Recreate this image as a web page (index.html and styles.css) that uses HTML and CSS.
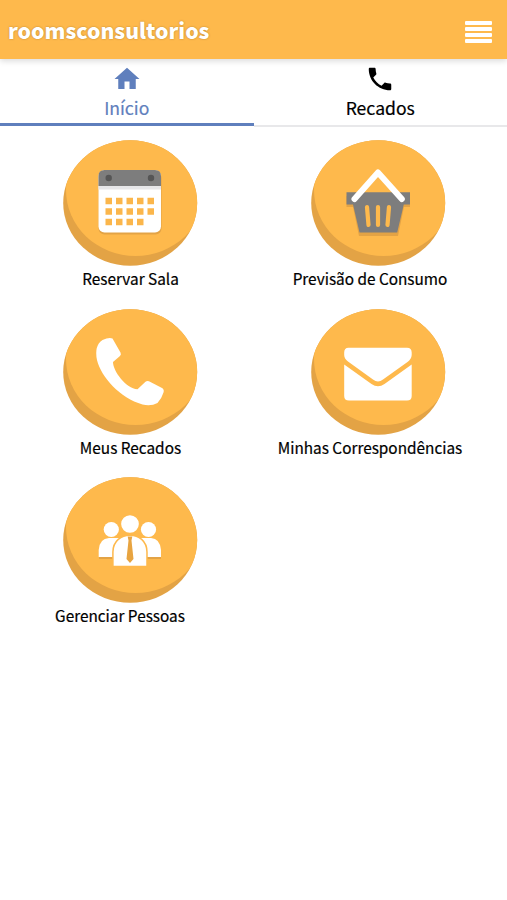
FILE: index.html
```html
<!DOCTYPE html>
<html lang="pt-BR">
<head>
    <meta charset="UTF-8">
    <meta name="viewport" content="width=device-width, initial-scale=1.0">
    <title>roomsconsultorios</title>
    <link rel="stylesheet" href="styles.css">
</head>
<body>
    <header class="topbar">
        <div class="brand">roomsconsultorios</div>
        <div class="menu-btn">
            <span></span>
            <span></span>
            <span></span>
            <span></span>
        </div>
    </header>

    <nav class="tabs">
        <a class="tab active">
            <svg viewBox="0 0 24 24"><path d="M10 20v-6h4v6h5v-8h3L12 3 2 12h3v8z"/></svg>
            <span>Início</span>
        </a>
        <a class="tab">
            <svg viewBox="0 0 24 24"><path d="M6.62 10.79c1.44 2.83 3.76 5.14 6.59 6.59l2.2-2.2c.27-.27.67-.36 1.02-.24 1.12.37 2.33.57 3.57.57.55 0 1 .45 1 1V20c0 .55-.45 1-1 1-9.39 0-17-7.61-17-17 0-.55.45-1 1-1h3.5c.55 0 1 .45 1 1 0 1.25.2 2.45.57 3.57.11.35.03.74-.25 1.02z"/></svg>
            <span>Recados</span>
        </a>
    </nav>

    <!-- round button shape shared by all the icons -->
    <svg class="defs">
        <defs>
            <clipPath id="round"><ellipse cx="67.2" cy="63" rx="67" ry="62.7"/></clipPath>
            <g id="disc">
                <ellipse class="disc-side" cx="67.2" cy="63" rx="67" ry="62.7"/>
                <ellipse class="disc-top" cx="72.5" cy="50" rx="69.5" ry="66" clip-path="url(#round)"/>
            </g>
        </defs>
    </svg>

    <main class="options">
        <a class="option">
            <svg class="option-icon" viewBox="0 0 134.4 126">
                <use href="#disc"/>
                <rect class="shade" x="35.5" y="32" width="63" height="62.5" rx="6"/>
                <rect class="white" x="35.5" y="30" width="62.5" height="62.5" rx="6"/>
                <path class="gray" d="M35.5 46V36q0-6 6-6h50.5q6 0 6 6v10z"/>
                <path class="paper-line" d="M35.5 46H98v3.5H35.5z"/>
                <circle class="dark" cx="45.7" cy="38" r="3.2"/>
                <circle class="dark" cx="88" cy="38" r="3.2"/>
                <path class="days" d="M42.5 61H92M42.5 71.5H92M42.5 82H81.5"/>
            </svg>
            <span class="caption">Reservar Sala</span>
        </a>
        <a class="option">
            <svg class="option-icon" viewBox="0 0 134.4 126">
                <use href="#disc"/>
                <path class="shade" d="M35.5 56H99v11H93L87 96H48L42 67H35.5z"/>
                <path class="gray" d="M35.5 52.2H99V64.5H92.8L86.2 92.5H48.5L42 64.5H35.5z"/>
                <path class="slots" d="M56 67L57.5 85M67 67V85M78 67L76.5 85"/>
                <path class="handle" d="M43.5 59L67 32.5L90.8 59"/>
            </svg>
            <span class="caption shifted">Previsão de Consumo</span>
        </a>
        <a class="option">
            <svg class="option-icon" viewBox="0 0 134.4 126">
                <use href="#disc"/>
                <path class="white" d="M39.5 31Q46 28 49.5 29.5L57.5 43.5Q58.5 45.5 57 47L50 53C50 62 63 79.5 74.5 80.3L82.5 72.7Q84 71.5 86 72.3L99 79Q101.5 80.5 100.5 83.5Q98.5 90 94.5 94Q88 97.5 79.5 95.5C57 89 38 68 34 51Q31 36.5 39.5 31z"/>
            </svg>
            <span class="caption">Meus Recados</span>
        </a>
        <a class="option">
            <svg class="option-icon" viewBox="0 0 134.4 126">
                <use href="#disc"/>
                <path class="white" d="M37.5 38.7H96Q100.7 38.7 100.7 43.5V46Q100.5 50 96.5 53L72 70.5Q67 74.5 62 70.5L37 52.5Q33.2 49.5 33.2 46V43.5Q33.2 38.7 37.5 38.7z"/>
                <path class="white" d="M33.2 55.5L60.5 75Q67 79.5 73.5 75L100.7 55.5V87Q100.7 91.5 96 91.5H38Q33.2 91.5 33.2 87z"/>
            </svg>
            <span class="caption shifted">Minhas Correspondências</span>
        </a>
        <a class="option">
            <svg class="option-icon" viewBox="0 0 134.4 126">
                <use href="#disc"/>
                <path class="shade" d="M36 80H98V82H84V90H50V82H36z"/>
                <circle class="white" cx="48.3" cy="52.5" r="7.6"/>
                <circle class="white" cx="85.5" cy="52.5" r="7.6"/>
                <path class="white" d="M35.7 80V73Q36.5 61.5 46 61H88Q97 61.5 98 73V80z"/>
                <path class="person" d="M49.9 89.5V75C50 52.5 84 52.5 84 75V89.5z"/>
                <circle class="person" cx="67" cy="47" r="9.6"/>
                <path class="tie" d="M64.7 59.5H69.3L68.5 63.5L70.5 82L67 86L63.5 82L65.5 63.5z"/>
            </svg>
            <span class="caption shifted-more">Gerenciar Pessoas</span>
        </a>
    </main>
</body>
</html>
```
FILE: styles.css
```css
* {
    box-sizing: border-box;
}
body {
    margin: 0;
    background: #fff;
    color: #000;
    font-family: "Noto Sans CJK JP", "Open Sans", sans-serif;
}
.topbar {
    position: relative;
    display: flex;
    justify-content: space-between;
    align-items: center;
    height: 59px;
    padding: 2px 15px 0 8px;
    background: #feb94c;
    box-shadow: 0 2px 6px rgba(0, 0, 0, 0.15);
}
.brand {
    padding-bottom: 2px;
    color: #fff;
    font-size: 21.2px;
    font-weight: 900;
    line-height: 30px;
    text-shadow: 0 0 2px rgba(90, 60, 0, 0.45);
}
.menu-btn {
    display: flex;
    flex-direction: column;
    gap: 2px;
    width: 27px;
    padding-top: 2px;
}
.menu-btn span {
    height: 4px;
    border-radius: 1px;
    background: #fff;
}
.tabs {
    display: flex;
    height: 68px;
}
.tab {
    flex: 1;
    display: flex;
    flex-direction: column;
    align-items: center;
    padding-top: 5px;
    border-bottom: 2px solid #e8e8ea;
    color: #000;
    font-size: 17.6px;
    font-weight: 400;
    line-height: 27px;
    -webkit-text-stroke: 0.2px currentColor;
}
.tab svg {
    width: 30px;
    height: 30px;
    fill: currentColor;
}
.tab.active {
    height: 67px;
    border-bottom: 3px solid #5f7fbd;
    color: #5f7fbd;
}
.defs {
    display: block;
    width: 0;
    height: 0;
}
.options {
    display: grid;
    grid-template-columns: 248px 248px;
    grid-auto-rows: 168.6px;
    padding: 13.2px 0 0 6.5px;
}
.option {
    display: flex;
    flex-direction: column;
    align-items: center;
}
.option-icon {
    width: 134.4px;
    height: 126px;
}
.caption {
    font-size: 15.35px;
    font-weight: 400;
    line-height: 24px;
    white-space: nowrap;
    -webkit-text-stroke: 0.2px currentColor;
}
.shifted {
    padding-right: 17px;
}
.shifted-more {
    padding-right: 21px;
}
.disc-side {
    fill: #e3a345;
}
.disc-top {
    fill: #feb94c;
}
.white {
    fill: #fff;
}
.gray {
    fill: #7d7d7d;
}
.dark {
    fill: #555;
}
.shade {
    fill: #e3a345;
}
.paper-line {
    fill: #e6e6e8;
}
.days {
    fill: none;
    stroke: #fbb64b;
    stroke-width: 6.5;
    stroke-dasharray: 6.5 4;
}
.slots {
    stroke: #feb94c;
    stroke-width: 4.2;
    stroke-linecap: round;
}
.handle {
    fill: none;
    stroke: #fff;
    stroke-width: 6;
    stroke-linecap: round;
    stroke-linejoin: round;
}
.person {
    fill: #fff;
    stroke: #feb94c;
    stroke-width: 1.5;
}
.tie {
    fill: #e8a440;
}
```
